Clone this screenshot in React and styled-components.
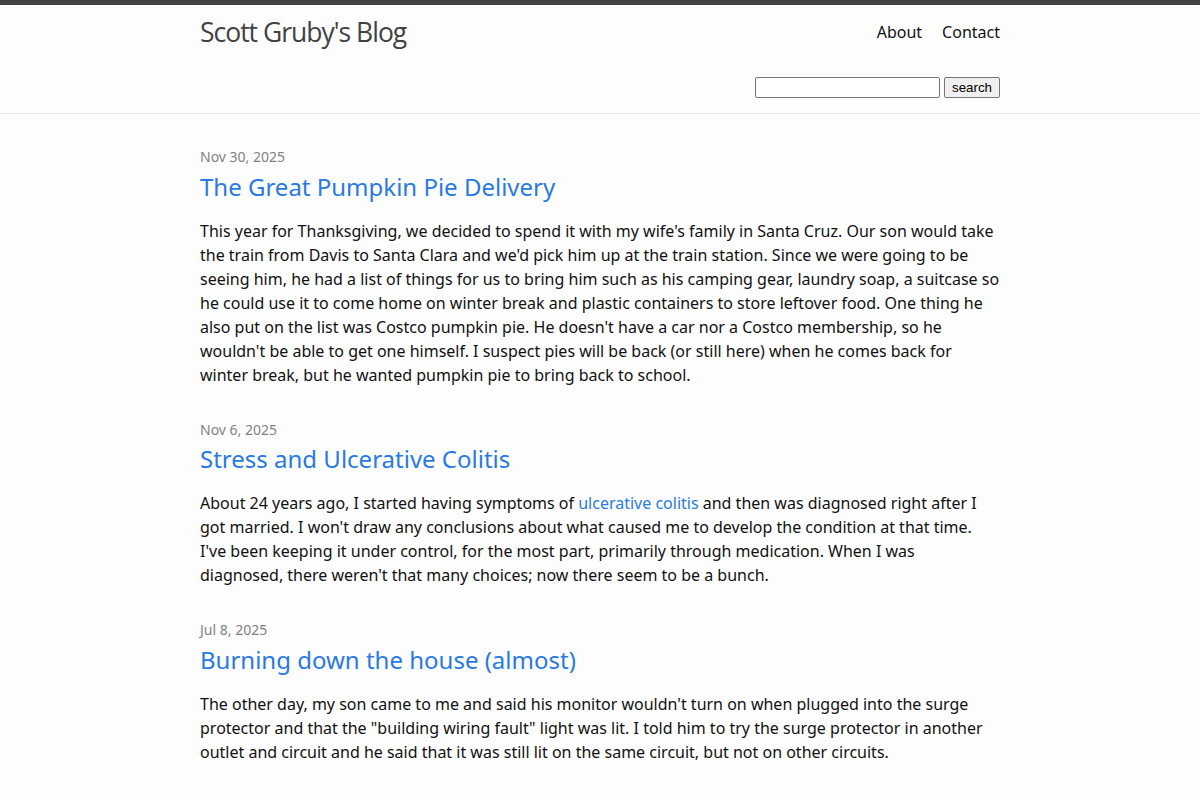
import React from 'react'
import styled, { createGlobalStyle } from 'styled-components'

const GlobalStyle = createGlobalStyle`
  html, body {
    margin: 0;
    padding: 0;
    background: #fdfdfd;
  }
  body {
    font-family: "Noto Sans", "Open Sans", sans-serif;
    font-size: 16px;
    line-height: 1.5;
    color: #111;
  }
`

const Header = styled.header`
  border-top: 5px solid #424242;
  border-bottom: 1px solid #e8e8e8;
  padding-bottom: 15px;
`

const Wrapper = styled.div`
  max-width: 800px;
  margin: 0 auto;
`

const TopRow = styled.div`
  display: flex;
  justify-content: space-between;
  align-items: center;
  height: 54px;
`

const SiteTitle = styled.a`
  font-family: "Open Sans", "Noto Sans", sans-serif;
  font-size: 26.5px;
  font-weight: 400;
  letter-spacing: -1px;
  color: #424242;
  text-decoration: none;
  line-height: 54px;
`

const Nav = styled.nav`
  display: flex;
  gap: 20px;
`

const NavLink = styled.a`
  color: #111;
  text-decoration: none;
  font-size: 16px;
  line-height: 54px;
`

const SearchForm = styled.form`
  display: flex;
  justify-content: flex-end;
  align-items: center;
  gap: 4px;
  margin-top: 18px;
`

const SearchInput = styled.input`
  box-sizing: border-box;
  width: 185px;
  height: 21px;
  border: 1px solid #767676;
  border-radius: 2px;
  background: #fff;
  padding: 1px 2px;
  margin: 0;
`

const SearchButton = styled.button`
  box-sizing: border-box;
  height: 21px;
  padding: 1px 7px;
  margin: 0;
  font-family: "Liberation Sans", Arial, sans-serif;
  font-size: 13.33px;
  color: #000;
  background: #efefef;
  border: 1px solid #767676;
  border-radius: 2px;
`

const Main = styled.main`
  padding: 32px 0;
`

const PostList = styled.ul`
  list-style: none;
  margin: 0;
  padding: 0;
`

const Post = styled.li`
  margin-bottom: 32px;
`

const PostDate = styled.span`
  display: block;
  font-size: 14px;
  line-height: 21px;
  color: #828282;
`

const PostTitle = styled.h2`
  margin: 1.5px 0 14px;
  font-size: 24px;
  font-weight: 400;
  line-height: 36px;
`

const TitleLink = styled.a`
  color: #2a7ae2;
  text-decoration: none;
`

const Excerpt = styled.p`
  margin: 0 0 15px;
  font-size: 16px;
  line-height: 24px;
`

const InlineLink = styled.a`
  color: #2a7ae2;
  text-decoration: none;
`

const posts = [
  {
    date: 'Nov 30, 2025',
    title: 'The Great Pumpkin Pie Delivery',
    body: (
      <>
        This year for Thanksgiving, we decided to spend it with my wife's family in Santa Cruz. Our son would take the train from Davis to Santa Clara and we'd pick him up at the train station. Since we were going to be seeing him, he had a list of things for us to bring him such as his camping gear, laundry soap, a suitcase so he could use it to come home on winter break and plastic containers to store leftover food. One thing he also put on the list was Costco pumpkin pie. He doesn't have a car nor a Costco membership, so he wouldn't be able to get one himself. I suspect pies will be back (or still here) when he comes back for winter break, but he wanted pumpkin pie to bring back to school.
      </>
    ),
  },
  {
    date: 'Nov 6, 2025',
    title: 'Stress and Ulcerative Colitis',
    body: (
      <>
        About 24 years ago, I started having symptoms of <InlineLink href="#">ulcerative colitis</InlineLink> and then was diagnosed right after I got married. I won't draw any conclusions about what caused me to develop the condition at that time. I've been keeping it under control, for the most part, primarily through medication. When I was diagnosed, there weren't that many choices; now there seem to be a bunch.
      </>
    ),
  },
  {
    date: 'Jul 8, 2025',
    title: 'Burning down the house (almost)',
    body: (
      <>
        The other day, my son came to me and said his monitor wouldn't turn on when plugged into the surge protector and that the "building wiring fault" light was lit. I told him to try the surge protector in another outlet and circuit and he said that it was still lit on the same circuit, but not on other circuits.
      </>
    ),
  },
]

export default function App() {
  return (
    <>
      <GlobalStyle />
      <Header>
        <Wrapper>
          <TopRow>
            <SiteTitle href="#">Scott Gruby's Blog</SiteTitle>
            <Nav>
              <NavLink href="#">About</NavLink>
              <NavLink href="#">Contact</NavLink>
            </Nav>
          </TopRow>
          <SearchForm onSubmit={e => e.preventDefault()}>
            <SearchInput type="text" />
            <SearchButton type="submit">search</SearchButton>
          </SearchForm>
        </Wrapper>
      </Header>
      <Main>
        <Wrapper>
          <PostList>
            {posts.map(post => (
              <Post key={post.title}>
                <PostDate>{post.date}</PostDate>
                <PostTitle>
                  <TitleLink href="#">{post.title}</TitleLink>
                </PostTitle>
                <Excerpt>{post.body}</Excerpt>
              </Post>
            ))}
          </PostList>
        </Wrapper>
      </Main>
    </>
  )
}
